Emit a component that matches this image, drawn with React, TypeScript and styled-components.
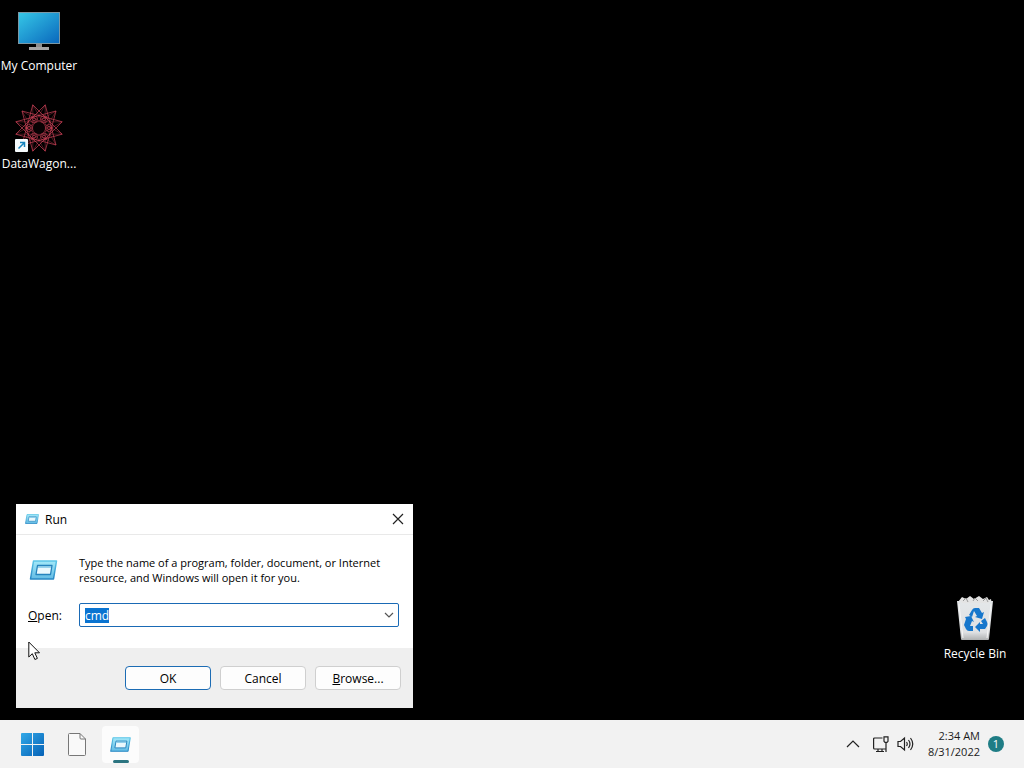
import React, { useEffect, useRef } from "react";
import styled, { createGlobalStyle } from "styled-components";

const GlobalStyle = createGlobalStyle`
  * { box-sizing: border-box; }
  body {
    margin: 0;
    background: #000;
    font-family: "Open Sans", "Noto Sans", sans-serif;
    font-size: 12px;
    line-height: 15px;
    color: #000;
  }
  button, input { font: inherit; color: inherit; }
`;

const Screen = styled.div`
  display: flex;
  flex-direction: column;
  height: 100vh;
  overflow: hidden;
`;

const Desktop = styled.main`
  position: relative;
  flex: 1;
  background: #000;
`;

const Shortcut = styled.button<{ $left?: number; $right?: number; $top?: number; $bottom?: number }>`
  position: absolute;
  left: ${(p) => (p.$left === undefined ? "auto" : `${p.$left}px`)};
  right: ${(p) => (p.$right === undefined ? "auto" : `${p.$right}px`)};
  top: ${(p) => (p.$top === undefined ? "auto" : `${p.$top}px`)};
  bottom: ${(p) => (p.$bottom === undefined ? "auto" : `${p.$bottom}px`)};
  width: 78px;
  display: flex;
  flex-direction: column;
  align-items: center;
  gap: 4px;
  padding: 0;
  border: 0;
  background: none;
  color: #fff;
  white-space: nowrap;
`;

const Window = styled.form`
  position: absolute;
  left: 16px;
  bottom: 12px;
  width: 397px;
  display: flex;
  flex-direction: column;
  background: #fff;
`;

const TitleBar = styled.header`
  display: flex;
  align-items: center;
  gap: 6px;
  height: 31px;
  padding-left: 9px;
  border-bottom: 1px solid #e9e9e9;
`;

const Title = styled.h1`
  flex: 1;
  margin: 0;
  font-size: 12px;
  font-weight: 400;
`;

const CloseButton = styled.button`
  display: flex;
  align-items: center;
  justify-content: center;
  width: 30px;
  height: 30px;
  padding: 0;
  border: 0;
  background: none;
`;

const DialogBody = styled.div`
  display: grid;
  grid-template-columns: 51px 1fr;
  row-gap: 18px;
  align-items: center;
  padding: 20px 14px 21px 12px;
`;

const Message = styled.p`
  margin: 0;
  font-size: 11px;
  white-space: nowrap;
`;

const ComboBox = styled.div`
  display: flex;
  align-items: center;
  height: 24px;
  padding: 0 4px;
  border: 1px solid #1a6ab5;
  border-radius: 2px;
`;

const ComboInput = styled.input`
  flex: 1;
  min-width: 0;
  padding: 0 1px;
  border: 0;
  outline: 0;
  background: none;
  &::selection { background: #0a74d1; color: #fff; }
`;

const ComboArrow = styled.button`
  display: flex;
  padding: 0;
  border: 0;
  background: none;
`;

const ButtonRow = styled.footer`
  display: flex;
  justify-content: flex-end;
  gap: 9px;
  padding: 18px 12px;
  background: #efefef;
`;

const PushButton = styled.button<{ $primary?: boolean }>`
  width: 86px;
  height: 24px;
  padding: 0;
  border: 1px solid ${(p) => (p.$primary ? "#1c6cb4" : "#cfcfcf")};
  border-radius: 4px;
  background: #fdfdfd;
`;

const Pointer = styled.svg`
  position: absolute;
  left: 28px;
  bottom: 59px;
`;

const Taskbar = styled.nav`
  display: flex;
  align-items: center;
  justify-content: space-between;
  height: 48px;
  padding: 0 20px 0 14px;
  background: #f2f2f2;
`;

const TaskGroup = styled.div`
  display: flex;
  align-items: center;
  gap: 7px;
`;

const TaskButton = styled.button<{ $active?: boolean }>`
  position: relative;
  display: flex;
  align-items: center;
  justify-content: center;
  width: 37px;
  height: 37px;
  padding: 0;
  border: 0;
  border-radius: 4px;
  background: ${(p) => (p.$active ? "#fcfcfc" : "none")};
  &::after {
    content: "";
    display: ${(p) => (p.$active ? "block" : "none")};
    position: absolute;
    bottom: 0;
    width: 16px;
    height: 3px;
    border-radius: 2px;
    background: #2b7480;
  }
`;

const Tray = styled.div`
  display: flex;
  align-items: center;
  gap: 8px;
`;

const TrayButton = styled.button`
  display: flex;
  padding: 0;
  border: 0;
  background: none;
  &:first-child { margin-right: 4px; }
`;

const Clock = styled.time`
  margin-left: 6px;
  font-size: 11px;
  line-height: 16px;
  text-align: right;
  color: #1b1b1b;
`;

const Badge = styled.span`
  width: 16px;
  height: 16px;
  border-radius: 8px;
  background: #1f7d85;
  color: #fff;
  font-size: 11px;
  line-height: 16px;
  text-align: center;
`;

function MonitorIcon() {
  return (
    <svg width="48" height="48" viewBox="0 0 48 48" aria-hidden="true">
      <defs>
        <linearGradient id="screen" x1="0" y1="0" x2="1" y2="1">
          <stop offset="0" stopColor="#35c6e6" />
          <stop offset="1" stopColor="#0a68bd" />
        </linearGradient>
      </defs>
      <rect x="3" y="6" width="42" height="32" fill="#7c98a5" />
      <rect x="4" y="7" width="40" height="30" fill="url(#screen)" />
      <rect x="21" y="38" width="6" height="4" fill="#8d8d8d" />
      <rect x="14" y="41" width="20" height="3" fill="#a5a5a5" />
    </svg>
  );
}

const ring = (count: number, radius: number, offset: number) =>
  Array.from({ length: count }, (_, i) => {
    const a = ((i + offset) * 2 * Math.PI) / count;
    return [24 + radius * Math.sin(a), 24 - radius * Math.cos(a)];
  });

const star = (count: number, radius: number, step: number, offset: number) => {
  const p = ring(count, radius, offset);
  return p
    .map((a, i) => {
      const b = p[(i + step) % count];
      return `M${a[0].toFixed(1)} ${a[1].toFixed(1)}L${b[0].toFixed(1)} ${b[1].toFixed(1)}`;
    })
    .join("");
};

function RosetteIcon() {
  return (
    <svg width="48" height="48" viewBox="0 0 48 48" aria-hidden="true">
      <g fill="none" stroke="#d2445a" strokeWidth="0.8">
        <path d={star(12, 24, 4, 0.5)} opacity="0.85" />
        <path d={star(12, 24, 5, 0.5)} opacity="0.45" />
        {ring(6, 10, 0.5).map(([x, y], i) => (
          <g key={i}>
            <circle cx={x} cy={y} r="3.500" opacity="0.7" />
            <circle cx={x} cy={y} r="1.500" opacity="0.9" />
          </g>
        ))}
      </g>
      <circle cx="24" cy="24" r="5.500" fill="#080203" />
      <rect x="0" y="35" width="13" height="13" rx="1" fill="#f5fafc" />
      <path d="M3.500 44.500 9 39M5 38.500h4.500v4.500" fill="none" stroke="#1583bd" strokeWidth="1.500" />
    </svg>
  );
}

function RecycleBinIcon() {
  return (
    <svg width="48" height="48" viewBox="0 0 48 48" aria-hidden="true">
      <defs>
        <linearGradient id="bin" x1="0" y1="0" x2="0" y2="1">
          <stop offset="0" stopColor="#e4e7e9" />
          <stop offset="0.8" stopColor="#dfe1e3" />
          <stop offset="1" stopColor="#aeb0b1" />
        </linearGradient>
      </defs>
      <path d="M7 8 11 3l4 2 4-3 4 3 5-3 4 3 4-2 2 3 2-1 1 6-2 4H8z" fill="#e4e4e4" />
      <path d="m12 7 3-3 2 4M22 7l2-3 3 3M32 7l3-3 2 4" fill="none" stroke="#9a9a9a" />
      <path d="M6 7h3l2 2h26l3-2h2l-4 38q0 1-1 1H11q-1 0-1-1z" fill="url(#bin)" />
      <path d="m8 10 4 34M40 10l-4 34" stroke="#f6f6f6" />
      <g fill="#1777cc">
        <path d="m18 21 3-5q1-2 3-2h4l3 5 2-1-2 7-7-2 2-1-3-5-2 6z" />
        <path d="m30 27 4-3 2 4q1 2 0 4l-2 3h-5v3l-5-5 5-5v2h3z" />
        <path d="m14 23 6-1 3 6-2-1-2 5h3v5h-4q-2 0-3-2l-2-4 2-6z" />
      </g>
    </svg>
  );
}

function RunIcon({ width, height }: { width: number; height: number }) {
  return (
    <svg width={width} height={height} viewBox="0 0 28 20" aria-hidden="true">
      <defs>
        <linearGradient id="run" x1="0" y1="0" x2="0" y2="1">
          <stop offset="0" stopColor="#a3e8f8" />
          <stop offset="1" stopColor="#62bbe4" />
        </linearGradient>
        <linearGradient id="runEdge" x1="0" y1="0" x2="0" y2="1">
          <stop offset="0" stopColor="#5cc6e8" />
          <stop offset="1" stopColor="#2787c4" />
        </linearGradient>
      </defs>
      <path d="M4 1h23L24 19H1z" fill="url(#run)" stroke="url(#runEdge)" strokeWidth="1.500" strokeLinejoin="round" />
      <path d="M8 5.500h14.500L21 14.500H6.500z" fill="#eaf8fd" stroke="#2583bd" strokeWidth="1.300" strokeLinejoin="round" />
      <path d="M8.500 7h13" stroke="#7cc6e6" strokeWidth="1.500" />
    </svg>
  );
}

function WindowsIcon() {
  return (
    <svg width="23" height="23" viewBox="0 0 23 23" aria-hidden="true">
      <defs>
        <linearGradient id="start" gradientUnits="userSpaceOnUse" x1="0" y1="0" x2="23" y2="23">
          <stop offset="0" stopColor="#32a9e8" />
          <stop offset="1" stopColor="#0561b6" />
        </linearGradient>
      </defs>
      <path d="M0 1q0-1 1-1h10v11H0zM12 0h10q1 0 1 1v10H12zM0 12h11v11H1q-1 0-1-1zM12 12h11v10q0 1-1 1H12z" fill="url(#start)" />
    </svg>
  );
}

function FileIcon() {
  return (
    <svg width="18" height="23" viewBox="0 0 18 23" aria-hidden="true">
      <path d="M.5 1.500q0-1 1-1H12L17.500 6v15.500q0 1-1 1h-15q-1 0-1-1z" fill="#f9f9f9" stroke="#777" />
      <path d="M12 .5v4.500q0 1 1 1h4.500" fill="none" stroke="#777" />
    </svg>
  );
}

function LineIcon({ d, width, height, color = "#222" }: { d: string; width: number; height: number; color?: string }) {
  return (
    <svg width={width} height={height} viewBox={`0 0 ${width} ${height}`} fill="none" stroke={color} strokeWidth="1.200" aria-hidden="true">
      <path d={d} />
    </svg>
  );
}

export default function App() {
  const command = useRef<HTMLInputElement>(null);

  useEffect(() => {
    command.current?.focus();
    command.current?.select();
  }, []);

  return (
    <Screen>
      <GlobalStyle />
      <Desktop>
        <Shortcut $left={0} $top={6}>
          <MonitorIcon />
          My Computer
        </Shortcut>
        <Shortcut $left={0} $top={104}>
          <RosetteIcon />
          DataWagon...
        </Shortcut>
        <Shortcut $right={10} $bottom={59}>
          <RecycleBinIcon />
          Recycle Bin
        </Shortcut>

        <Window aria-label="Run" onSubmit={(e) => e.preventDefault()}>
          <TitleBar>
            <RunIcon width={14} height={10} />
            <Title>Run</Title>
            <CloseButton type="button" aria-label="Close">
              <LineIcon d="m1 1 10 10M11 1 1 11" width={12} height={12} />
            </CloseButton>
          </TitleBar>
          <DialogBody>
            <RunIcon width={31} height={20} />
            <Message>
              Type the name of a program, folder, document, or Internet
              <br />
              resource, and Windows will open it for you.
            </Message>
            <label htmlFor="command">
              <u>O</u>pen:
            </label>
            <ComboBox>
              <ComboInput id="command" ref={command} defaultValue="cmd" />
              <ComboArrow type="button" aria-label="Show history">
                <LineIcon d="m1 1 4 4 4-4" width={10} height={6} color="#555" />
              </ComboArrow>
            </ComboBox>
          </DialogBody>
          <ButtonRow>
            <PushButton type="submit" $primary>
              OK
            </PushButton>
            <PushButton type="button">Cancel</PushButton>
            <PushButton type="button">
              <u>B</u>rowse...
            </PushButton>
          </ButtonRow>
        </Window>

        <Pointer width="13" height="20" viewBox="0 0 13 20" aria-hidden="true">
          <path d="M.8 1v15l3.500-3.300 2.600 5.800 2.500-1.100-2.600-5.600h4.700z" fill="#fff" stroke="#111" />
        </Pointer>
      </Desktop>

      <Taskbar>
        <TaskGroup>
          <TaskButton aria-label="Start">
            <WindowsIcon />
          </TaskButton>
          <TaskButton aria-label="Document">
            <FileIcon />
          </TaskButton>
          <TaskButton aria-label="Run" $active>
            <RunIcon width={21} height={15} />
          </TaskButton>
        </TaskGroup>
        <Tray>
          <TrayButton aria-label="Show hidden icons">
            <LineIcon d="m1 7 6-6 6 6" width={14} height={8} />
          </TrayButton>
          <TrayButton aria-label="Network">
            <LineIcon d="M10.500 2H2.600q-1 0-1 1v9q0 1 1 1h11M4 15.500h8M6 13v2.500M10 13v2.500M12 .8h4v4.500l-1 1h-2l-1-1zM14 6.300V16" width={17} height={17} />
          </TrayButton>
          <TrayButton aria-label="Volume">
            <LineIcon d="M1 5.500h2.500L7.500 2v12l-4-3.500H1zM9.500 6q1.500 2 0 4M11.500 4q3 4 0 8M13.500 2q4.500 6 0 12" width={17} height={16} />
          </TrayButton>
          <Clock dateTime="2022-08-31T02:34">
            2:34 AM
            <br />
            8/31/2022
          </Clock>
          <Badge>1</Badge>
        </Tray>
      </Taskbar>
    </Screen>
  );
}
